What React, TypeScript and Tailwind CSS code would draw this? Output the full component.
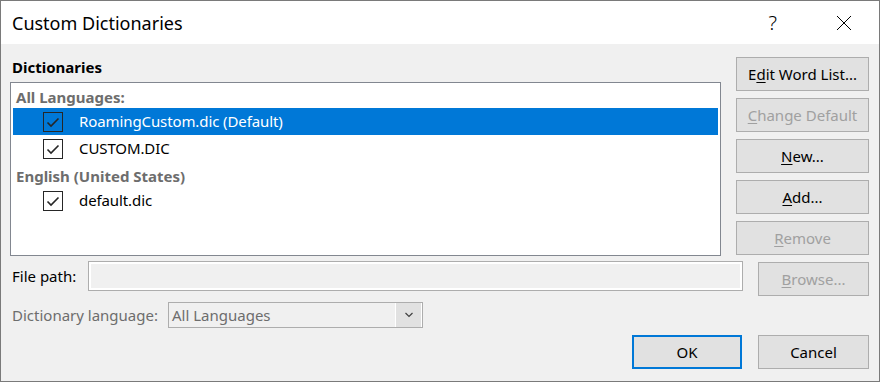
import React from "react";

const font = { fontFamily: '"Noto Sans", "Open Sans", sans-serif' };

function Check() {
    return (
        <div className="w-[20px] h-[20px] border border-[#262626] flex items-center justify-center shrink-0">
            <svg width="18" height="18" viewBox="0 0 18 18">
                <path d="M3.5 9.5 L7 13 L14.5 5.5" fill="none" stroke="#262626" strokeWidth="1.6" />
            </svg>
        </div>
    );
}

function Btn({ children, disabled, primary, className = "" }: { children: React.ReactNode; disabled?: boolean; primary?: boolean; className?: string }) {
    return (
        <div
            className={`h-[34px] flex items-center justify-center bg-[#e1e1e1] text-[15px] ${
                primary ? "border-2 border-[#0078d7]" : "border border-[#adadad]"
            } ${disabled ? "text-[#a0a0a0]" : "text-black"} ${className}`}
        >
            {children}
        </div>
    );
}

function Row({ label, selected }: { label: string; selected?: boolean }) {
    return (
        <div className={`h-[27px] flex items-center pl-[30px] ${selected ? "bg-[#0078d7] text-white" : "text-black"}`}>
            <Check />
            <span className="ml-[16px] text-[15px] tracking-[-0.1px]">{label}</span>
        </div>
    );
}

export default function App() {
    return (
        <div style={font} className="w-[880px] h-[382px] border border-[#7a7a7a] flex flex-col overflow-hidden">
            {/* Title bar */}
            <div className="h-[43px] bg-white flex items-center pl-[11px] pr-[27px] shrink-0">
                <span className="text-[18px] text-black leading-none">Custom Dictionaries</span>
                <span className="ml-auto text-[20px] font-light text-black leading-none mr-[59px]">?</span>
                <svg width="16" height="16" viewBox="0 0 16 16">
                    <path d="M1 1 L15 15 M15 1 L1 15" stroke="#000" strokeWidth="1" />
                </svg>
            </div>

            {/* Body */}
            <div className="flex-1 bg-[#f0f0f0] px-[9px] flex flex-col">
                <div className="flex gap-[15px] pt-[13px]">
                    <div className="w-[711px] flex flex-col">
                        <div className="h-[20px] flex items-center pl-[2px] text-[15px] font-bold text-black">Dictionaries</div>
                        <div className="mt-[5px] h-[174px] border border-[#828790] bg-white p-[2px]">
                            <div className="h-[23px] flex items-center pt-[1px] pl-[3px] text-[15px] font-bold text-[#6d6d6d]">All Languages:</div>
                            <Row label="RoamingCustom.dic (Default)" selected />
                            <Row label="CUSTOM.DIC" />
                            <div className="h-[25px] flex items-center pt-[3px] pl-[3px] text-[15px] font-bold text-[#6d6d6d]">English (United States)</div>
                            <Row label="default.dic" />
                        </div>
                    </div>
                    <div className="w-[133px] flex flex-col gap-[7px]">
                        <Btn>E<u className="underline-offset-2">d</u>it Word List...</Btn>
                        <Btn disabled><u className="underline-offset-2">C</u>hange Default</Btn>
                        <Btn><u className="underline-offset-2">N</u>ew...</Btn>
                        <Btn><u className="underline-offset-2">A</u>dd...</Btn>
                        <Btn disabled><u className="underline-offset-2">R</u>emove</Btn>
                    </div>
                </div>

                {/* File path */}
                <div className="flex items-start mt-[5px]">
                    <div className="w-[78px] h-[30px] flex items-center pl-[2px] text-[15px] text-black">File path:</div>
                    <div className="w-[655px] h-[30px] border border-[#adadad] bg-[#f0f0f0] shadow-[inset_0_0_0_2px_#ffffff]" />
                    <Btn disabled className="w-[111px] ml-[15px] mt-[1px]"><u className="underline-offset-2">B</u>rowse...</Btn>
                </div>

                {/* Dictionary language */}
                <div className="flex items-center mt-[6px]">
                    <div className="w-[158px] pl-[2px] text-[15px] text-[#6d6d6d]">Dictionary language:</div>
                    <div className="w-[255px] h-[26px] border border-[#adadad] flex">
                        <div className="flex-1 flex items-center pl-[3px] text-[15px] text-[#6d6d6d]">All Languages</div>
                        <div className="w-[27px] bg-[#e1e1e1] border-l border-white border-r border-[#adadad] flex items-center justify-center">
                            <svg width="10" height="6" viewBox="0 0 10 6">
                                <path d="M1.5 1 L5 4.5 L8.5 1" fill="none" stroke="#404040" strokeWidth="1.2" />
                            </svg>
                        </div>
                    </div>
                </div>

                {/* OK / Cancel */}
                <div className="flex justify-end gap-[16px] mt-[7px] pr-[1px]">
                    <Btn primary className="w-[110px]">OK</Btn>
                    <Btn className="w-[111px]">Cancel</Btn>
                </div>
            </div>
        </div>
    );
}
